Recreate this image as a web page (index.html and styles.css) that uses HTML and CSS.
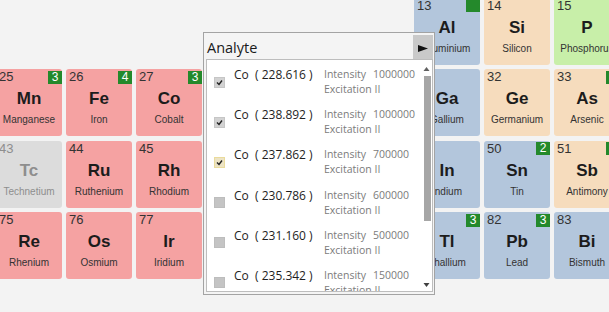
FILE: index.html
```html
<!DOCTYPE html>
<html>
<head>
<meta charset="utf-8">
<link rel="stylesheet" href="styles.css">
</head>
<body>
<div class="ptable">
  <div class="gap"></div><div class="gap"></div><div class="gap"></div><div class="gap"></div>
  <div class="tile post"><span class="num">13</span><span class="badge"></span><span class="sym">Al</span><span class="name">Aluminium</span></div>
  <div class="tile metalloid"><span class="num">14</span><span class="sym">Si</span><span class="name">Silicon</span></div>
  <div class="tile nonmetal"><span class="num">15</span><span class="sym">P</span><span class="name">Phosphorus</span></div>

  <div class="tile trans"><span class="num">25</span><span class="badge">3</span><span class="sym">Mn</span><span class="name">Manganese</span></div>
  <div class="tile trans"><span class="num">26</span><span class="badge">4</span><span class="sym">Fe</span><span class="name">Iron</span></div>
  <div class="tile trans"><span class="num">27</span><span class="badge">3</span><span class="sym">Co</span><span class="name">Cobalt</span></div>
  <div class="gap"></div>
  <div class="tile post"><span class="num">31</span><span class="sym">Ga</span><span class="name">Gallium</span></div>
  <div class="tile metalloid"><span class="num">32</span><span class="sym">Ge</span><span class="name">Germanium</span></div>
  <div class="tile metalloid"><span class="num">33</span><span class="badge">3</span><span class="sym">As</span><span class="name">Arsenic</span></div>

  <div class="tile inactive"><span class="num">43</span><span class="sym">Tc</span><span class="name">Technetium</span></div>
  <div class="tile trans"><span class="num">44</span><span class="sym">Ru</span><span class="name">Ruthenium</span></div>
  <div class="tile trans"><span class="num">45</span><span class="sym">Rh</span><span class="name">Rhodium</span></div>
  <div class="gap"></div>
  <div class="tile post"><span class="num">49</span><span class="sym">In</span><span class="name">Indium</span></div>
  <div class="tile post"><span class="num">50</span><span class="badge">2</span><span class="sym">Sn</span><span class="name">Tin</span></div>
  <div class="tile metalloid"><span class="num">51</span><span class="badge">3</span><span class="sym">Sb</span><span class="name">Antimony</span></div>

  <div class="tile trans"><span class="num">75</span><span class="sym">Re</span><span class="name">Rhenium</span></div>
  <div class="tile trans"><span class="num">76</span><span class="sym">Os</span><span class="name">Osmium</span></div>
  <div class="tile trans"><span class="num">77</span><span class="sym">Ir</span><span class="name">Iridium</span></div>
  <div class="gap"></div>
  <div class="tile post"><span class="num">81</span><span class="badge">3</span><span class="sym">Tl</span><span class="name">Thallium</span></div>
  <div class="tile post"><span class="num">82</span><span class="badge">3</span><span class="sym">Pb</span><span class="name">Lead</span></div>
  <div class="tile post"><span class="num">83</span><span class="sym">Bi</span><span class="name">Bismuth</span></div>
</div>

<div class="popup">
  <div class="popup-head">
    <span class="popup-title">Analyte</span>
    <span class="popup-btn"><svg width="10" height="7" viewBox="0 0 10 7"><polygon points="0,0 10,3.5 0,7" fill="#111"/></svg></span>
  </div>
  <div class="list">
    <div class="items">
      <div class="item">
        <span class="cb checked"><svg width="9" height="9" viewBox="0 0 9 9"><polyline points="2,4.5 4,6.5 7,2.5" fill="none" stroke="#222" stroke-width="1.4"/></svg></span>
        <span class="el">Co</span><span class="wl">( 228.616 )</span>
        <span class="lbl">Intensity</span><span class="val">1000000</span>
        <span class="exc">Excitation II</span>
      </div>
      <div class="item">
        <span class="cb checked"><svg width="9" height="9" viewBox="0 0 9 9"><polyline points="2,4.5 4,6.5 7,2.5" fill="none" stroke="#222" stroke-width="1.4"/></svg></span>
        <span class="el">Co</span><span class="wl">( 238.892 )</span>
        <span class="lbl">Intensity</span><span class="val">1000000</span>
        <span class="exc">Excitation II</span>
      </div>
      <div class="item">
        <span class="cb checked hover"><svg width="9" height="9" viewBox="0 0 9 9"><polyline points="2,4.5 4,6.5 7,2.5" fill="none" stroke="#222" stroke-width="1.4"/></svg></span>
        <span class="el">Co</span><span class="wl">( 237.862 )</span>
        <span class="lbl">Intensity</span><span class="val">700000</span>
        <span class="exc">Excitation II</span>
      </div>
      <div class="item">
        <span class="cb"></span>
        <span class="el">Co</span><span class="wl">( 230.786 )</span>
        <span class="lbl">Intensity</span><span class="val">600000</span>
        <span class="exc">Excitation II</span>
      </div>
      <div class="item">
        <span class="cb"></span>
        <span class="el">Co</span><span class="wl">( 231.160 )</span>
        <span class="lbl">Intensity</span><span class="val">500000</span>
        <span class="exc">Excitation II</span>
      </div>
      <div class="item">
        <span class="cb"></span>
        <span class="el">Co</span><span class="wl">( 235.342 )</span>
        <span class="lbl">Intensity</span><span class="val">150000</span>
        <span class="exc">Excitation II</span>
      </div>
    </div>
    <div class="scrollbar">
      <svg class="arrow-up" width="11" height="5" viewBox="0 0 11 5"><polygon points="2.5,5 5.5,1 8.5,5" fill="#606060"/></svg>
      <div class="thumb"></div>
      <svg class="arrow-down" width="11" height="5" viewBox="0 0 11 5"><polygon points="2.5,0 8.5,0 5.5,4" fill="#404040"/></svg>
    </div>
  </div>
</div>
</body>
</html>
```

FILE: styles.css
```css
html, body {
  margin: 0;
  padding: 0;
  width: 609px;
  height: 312px;
  overflow: hidden;
  background: #f3f3f3;
}

body {
  position: relative;
  font-family: "Liberation Sans", Arial, sans-serif;
}

.ptable {
  display: grid;
  grid-template-columns: 66px 66px 66px 204px 66px 66px 66px;
  grid-auto-rows: 67px;
  column-gap: 4px;
  row-gap: 4.5px;
  margin: -2.5px 0 0 -4px;
  width: max-content;
}

.tile {
  position: relative;
  border-radius: 3px;
  display: flex;
  flex-direction: column;
  color: #1c1c1c;
}

.trans { background: #f5a2a2; }
.post { background: #b3c6dc; }
.metalloid { background: #f6dcbd; }
.nonmetal { background: #c8efa9; }
.inactive { background: #dcdcdc; color: #8e8e8e; }

.num {
  font-size: 13px;
  line-height: 15px;
  padding-left: 3px;
  color: #333;
}

.sym {
  font-size: 17px;
  font-weight: bold;
  line-height: 20px;
  text-align: center;
  margin-top: 5px;
}

.name {
  font-size: 10px;
  line-height: 12px;
  text-align: center;
  margin-top: 5px;
  color: #333;
  white-space: nowrap;
}

.inactive .num,
.inactive .name,
.inactive .sym { color: #8e8e8e; }

.badge {
  position: absolute;
  top: 1.5px;
  right: 0;
  width: 14px;
  height: 13px;
  background: #24892b;
  color: #fff;
  font-size: 12px;
  line-height: 13px;
  text-align: center;
}

/* popup */
.popup {
  position: absolute;
  left: 203px;
  top: 32px;
  width: 232px;
  height: 263px;
  box-sizing: border-box;
  border: 1px solid #a3a3a3;
  background: #f4f4f4;
  padding: 0 1px 2px 2px;
  display: flex;
  flex-direction: column;
  font-family: "Open Sans", "Noto Sans", sans-serif;
}

.popup-head {
  display: flex;
  justify-content: space-between;
  align-items: flex-start;
  height: 26px;
  flex: none;
}

.popup-title {
  font-size: 14.5px;
  line-height: 20px;
  margin-top: 5px;
  margin-left: 1px;
  color: #1a1a1a;
}

.popup-btn {
  width: 20px;
  height: 24px;
  margin-top: 2px;
  background: #c9c9c9;
  display: flex;
  align-items: center;
  justify-content: center;
  padding-top: 3px;
  box-sizing: border-box;
}

.popup-btn svg { display: block; }

.list {
  flex: 1;
  min-height: 0;
  background: #fff;
  border: 1px solid #bdbdbd;
  display: flex;
  overflow: hidden;
}

.items {
  flex: 1;
  padding: 2px 0 0 7px;
  overflow: hidden;
}

.item {
  display: grid;
  grid-template-columns: 11px 9px 21px 69px 49px auto;
  grid-template-rows: 15px 15px;
  height: 40.2px;
  box-sizing: border-box;
  padding-top: 5px;
  white-space: nowrap;
}

.cb {
  grid-column: 1;
  grid-row: 1 / span 2;
  align-self: center;
  width: 11px;
  height: 11px;
  box-sizing: border-box;
  background: #c4c4c4;
  border: 1px solid #bdbdbd;
  display: flex;
  align-items: center;
  justify-content: center;
}

.cb.checked {
  background: #d2d2d2;
  border-color: #c6c6c6;
}

.cb.hover {
  background: #ece3c4;
  border-color: #eadb9c;
}

.cb svg { display: block; }

.el {
  grid-column: 3;
  grid-row: 1;
  font-size: 12px;
  line-height: 15px;
  color: #1e1e1e;
}

.wl {
  grid-column: 4;
  grid-row: 1;
  font-size: 12px;
  line-height: 15px;
  color: #1e1e1e;
}

.lbl, .val, .exc {
  font-size: 10.5px;
  line-height: 15px;
  color: #7b7b7b;
}

.lbl { grid-column: 5; grid-row: 1; }
.val { grid-column: 6; grid-row: 1; }
.exc { grid-column: 5 / span 2; grid-row: 2; }

.scrollbar {
  width: 11px;
  flex: none;
  display: flex;
  flex-direction: column;
}

.arrow-up {
  display: block;
  margin-top: 6px;
}

.thumb {
  margin: 5px 0 0 3px;
  width: 7px;
  height: 145px;
  background: #a6a6a6;
}

.arrow-down {
  display: block;
  margin-top: auto;
  margin-bottom: 3px;
}
```
